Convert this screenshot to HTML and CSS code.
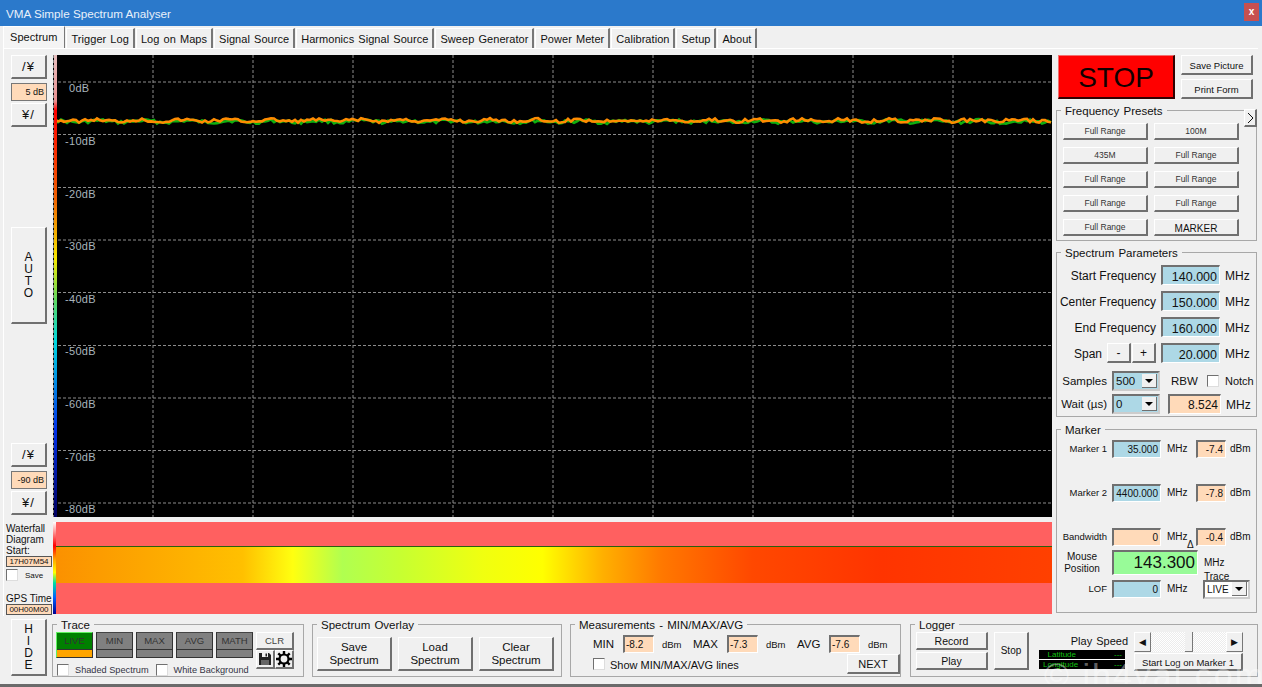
FILE: index.html
```html
<!DOCTYPE html>
<html lang="en">
<head>
    <meta charset="UTF-8">
    <title>VMA Simple Spectrum Analyser</title>
    <link rel="stylesheet" href="styles.css">
</head>
<body>
    <div class="window">
        <div class="titlebar">
            <span>VMA Simple Spectrum Analyser</span>
            <div class="close">x</div>
        </div>

        <div class="tabs">
            <div class="tab active">Spectrum</div>
            <div class="tab">Trigger Log</div>
            <div class="tab">Log on Maps</div>
            <div class="tab">Signal Source</div>
            <div class="tab">Harmonics Signal Source</div>
            <div class="tab">Sweep Generator</div>
            <div class="tab">Power Meter</div>
            <div class="tab">Calibration</div>
            <div class="tab">Setup</div>
            <div class="tab">About</div>
        </div>

        <div class="panel">
            <div class="rail">
                <div class="btn step">/¥</div>
                <div class="field peach rail-field">5 dB</div>
                <div class="btn step">¥/</div>
                <div class="btn auto">A<br>U<br>T<br>O</div>
                <div class="btn step low">/¥</div>
                <div class="field peach rail-field">-90 dB</div>
                <div class="btn step">¥/</div>
            </div>

            <div class="chart">
                <svg id="plot" width="999" height="462" viewBox="0 0 999 462">
                    <rect class="plot-bg" width="999" height="462"/>
                    <defs>
                        <linearGradient id="scale" x1="0" y1="0" x2="0" y2="1">
                            <stop offset="0" stop-color="#e8c0c0"/>
                            <stop offset="0.1" stop-color="#e89090"/>
                            <stop offset="0.12" stop-color="#ff0000"/>
                            <stop offset="0.31" stop-color="#f06000"/>
                            <stop offset="0.44" stop-color="#f8e800"/>
                            <stop offset="0.53" stop-color="#60d860"/>
                            <stop offset="0.62" stop-color="#00d8e0"/>
                            <stop offset="0.81" stop-color="#0030e8"/>
                            <stop offset="1" stop-color="#000060"/>
                        </linearGradient>
                    </defs>
                    <g class="grid">
                        <line x1="100" y1="0" x2="100" y2="462"/>
                        <line x1="200" y1="0" x2="200" y2="462"/>
                        <line x1="300" y1="0" x2="300" y2="462"/>
                        <line x1="400" y1="0" x2="400" y2="462"/>
                        <line x1="500" y1="0" x2="500" y2="462"/>
                        <line x1="600" y1="0" x2="600" y2="462"/>
                        <line x1="700" y1="0" x2="700" y2="462"/>
                        <line x1="800" y1="0" x2="800" y2="462"/>
                        <line x1="900" y1="0" x2="900" y2="462"/>
                        <line x1="0" y1="27" x2="999" y2="27"/>
                        <line x1="0" y1="79.5" x2="999" y2="79.5"/>
                        <line x1="0" y1="132.5" x2="999" y2="132.5"/>
                        <line x1="0" y1="185" x2="999" y2="185"/>
                        <line x1="0" y1="237.5" x2="999" y2="237.5"/>
                        <line x1="0" y1="290.5" x2="999" y2="290.5"/>
                        <line x1="0" y1="343" x2="999" y2="343"/>
                        <line x1="0" y1="395.5" x2="999" y2="395.5"/>
                        <line x1="0" y1="448" x2="999" y2="448"/>
                    </g>
                    <g class="db">
                        <text x="16" y="37">0dB</text>
                        <text x="12" y="90">-10dB</text>
                        <text x="12" y="143">-20dB</text>
                        <text x="12" y="195">-30dB</text>
                        <text x="12" y="248">-40dB</text>
                        <text x="12" y="300">-50dB</text>
                        <text x="12" y="353">-60dB</text>
                        <text x="12" y="406">-70dB</text>
                        <text x="12" y="458">-80dB</text>
                    </g>
                    <polyline id="traceGreen" class="trace-green" points=""/>
                    <polyline id="traceOrange" class="trace-orange" points=""/>
                    <rect class="scale" x="1" width="3" height="462"/>
                    <line class="scale-edge" x1="0.5" y1="0" x2="0.5" y2="462"/>
                </svg>
            </div>

            <div class="side">
                <div class="side-top">
                    <div class="stop">STOP</div>
                    <div class="side-actions">
                        <div class="btn small">Save Picture</div>
                        <div class="btn small">Print Form</div>
                    </div>
                </div>

                <fieldset class="group presets">
                    <legend>Frequency Presets</legend>
                    <div class="btn more">
                        <svg width="7" height="12" viewBox="0 0 7 12">
                            <polyline points="1,1 6,6 1,11" fill="none" stroke="#111" stroke-width="1"/>
                        </svg>
                    </div>
                    <div class="preset-grid">
                        <div class="btn preset">Full Range</div>
                        <div class="btn preset">100M</div>
                        <div class="btn preset">435M</div>
                        <div class="btn preset">Full Range</div>
                        <div class="btn preset">Full Range</div>
                        <div class="btn preset">Full Range</div>
                        <div class="btn preset">Full Range</div>
                        <div class="btn preset">Full Range</div>
                        <div class="btn preset">Full Range</div>
                        <div class="btn preset marker-btn">MARKER</div>
                    </div>
                </fieldset>

                <fieldset class="group params">
                    <legend>Spectrum Parameters</legend>
                    <div class="param-row">
                        <div class="param-label">Start Frequency</div>
                        <div class="field blue param-field">140.000</div>
                        <div class="unit">MHz</div>
                    </div>
                    <div class="param-row">
                        <div class="param-label">Center Frequency</div>
                        <div class="field blue param-field">150.000</div>
                        <div class="unit">MHz</div>
                    </div>
                    <div class="param-row">
                        <div class="param-label">End Frequency</div>
                        <div class="field blue param-field">160.000</div>
                        <div class="unit">MHz</div>
                    </div>
                    <div class="param-row">
                        <div class="param-label span-label">Span</div>
                        <div class="btn span-btn">-</div>
                        <div class="btn span-btn">+</div>
                        <div class="field blue param-field">20.000</div>
                        <div class="unit">MHz</div>
                    </div>
                    <div class="option-row first">
                        <div class="option-label">Samples</div>
                        <div class="combo blue"><span>500</span><div class="combo-arrow"></div></div>
                        <div class="rbw">RBW</div>
                        <input type="checkbox" class="check">
                        <div class="notch">Notch</div>
                    </div>
                    <div class="option-row">
                        <div class="option-label">Wait (µs)</div>
                        <div class="combo blue"><span>0</span><div class="combo-arrow"></div></div>
                        <div class="field peach rbw-field">8.524</div>
                        <div class="unit">MHz</div>
                    </div>
                </fieldset>

                <fieldset class="group marker">
                    <legend>Marker</legend>
                    <div class="marker-row">
                        <div class="marker-label">Marker 1</div>
                        <div class="field blue marker-field">35.000</div>
                        <div class="marker-unit">MHz</div>
                        <div class="field peach dbm-field">-7.4</div>
                        <div class="dbm-unit">dBm</div>
                    </div>
                    <div class="marker-row spaced">
                        <div class="marker-label">Marker 2</div>
                        <div class="field blue marker-field">4400.000</div>
                        <div class="marker-unit">MHz</div>
                        <div class="field peach dbm-field">-7.8</div>
                        <div class="dbm-unit">dBm</div>
                    </div>
                    <div class="marker-row spaced">
                        <div class="marker-label">Bandwidth</div>
                        <div class="field peach marker-field">0</div>
                        <div class="marker-unit">MHz<span class="delta">Δ</span></div>
                        <div class="field peach dbm-field">-0.4</div>
                        <div class="dbm-unit">dBm</div>
                    </div>
                    <div class="mouse-row">
                        <div class="marker-label mouse-label">Mouse<br>Position</div>
                        <div class="field mint mouse-field">143.300</div>
                        <div class="mouse-unit">MHz<br>Trace</div>
                    </div>
                    <div class="marker-row lof-row">
                        <div class="marker-label">LOF</div>
                        <div class="field blue marker-field">0</div>
                        <div class="marker-unit lof-unit">MHz</div>
                        <div class="combo white trace-combo"><span>LIVE</span><div class="combo-arrow"></div></div>
                    </div>
                </fieldset>
            </div>

            <div class="fall-info">
                <div class="fall-title">Waterfall<br>Diagram<br>Start:</div>
                <div class="stamp">17H07M54</div>
                <div class="save-row">
                    <input type="checkbox" class="check">
                    <span>Save</span>
                </div>
                <div class="fall-title gps">GPS Time</div>
                <div class="stamp">00H00M00</div>
            </div>

            <div class="fall">
                <div class="fall-top"></div>
                <div class="fall-line"></div>
                <div class="fall-band"></div>
                <div class="fall-bottom"></div>
                <div class="fall-scale"></div>
            </div>
        </div>

        <div class="strip">
            <div class="btn hide">H<br>I<br>D<br>E</div>

            <fieldset class="group trace">
                <legend>Trace</legend>
                <div class="trace-row">
                    <div class="trace-btn live"><div class="trace-top">LIVE</div><div class="trace-low"></div></div>
                    <div class="trace-btn"><div class="trace-top">MIN</div><div class="trace-low"></div></div>
                    <div class="trace-btn"><div class="trace-top">MAX</div><div class="trace-low"></div></div>
                    <div class="trace-btn"><div class="trace-top">AVG</div><div class="trace-low"></div></div>
                    <div class="trace-btn"><div class="trace-top">MATH</div><div class="trace-low"></div></div>
                    <div class="trace-tools">
                        <div class="btn clr">CLR</div>
                        <div class="tool-row">
                            <div class="btn tool">
                                <svg width="14" height="14" viewBox="0 0 14 14">
                                    <path fill="#222" d="M1 1h10l2 2v10H1z"/>
                                    <rect fill="#f0f0f0" x="4" y="1" width="6" height="4"/>
                                    <rect fill="#222" x="7.5" y="1.5" width="1.5" height="3"/>
                                    <rect fill="#666" x="3" y="8" width="8" height="5"/>
                                </svg>
                            </div>
                            <div class="btn tool">
                                <svg width="16" height="16" viewBox="0 0 16 16">
                                    <circle cx="8" cy="8" r="4.5" fill="none" stroke="#000" stroke-width="2.2"/>
                                    <path stroke="#000" stroke-width="2.4" d="M8 0v3M8 13v3M0 8h3M13 8h3M2.3 2.3l2.2 2.2M11.5 11.5l2.2 2.2M2.3 13.7l2.2-2.2M11.5 4.5l2.2-2.2"/>
                                </svg>
                            </div>
                        </div>
                    </div>
                </div>
                <div class="trace-checks">
                    <input type="checkbox" class="check">
                    <span class="shaded">Shaded Spectrum</span>
                    <input type="checkbox" class="check">
                    <span>White Background</span>
                </div>
            </fieldset>

            <fieldset class="group overlay">
                <legend>Spectrum Overlay</legend>
                <div class="overlay-row">
                    <div class="btn overlay-btn">Save<br>Spectrum</div>
                    <div class="btn overlay-btn">Load<br>Spectrum</div>
                    <div class="btn overlay-btn">Clear<br>Spectrum</div>
                </div>
            </fieldset>

            <fieldset class="group measure">
                <legend>Measurements - MIN/MAX/AVG</legend>
                <div class="measure-row">
                    <span class="measure-name">MIN</span>
                    <div class="field peach measure-field">-8.2</div>
                    <span class="measure-unit">dBm</span>
                    <span class="measure-name name-max">MAX</span>
                    <div class="field peach measure-field">-7.3</div>
                    <span class="measure-unit">dBm</span>
                    <span class="measure-name name-avg">AVG</span>
                    <div class="field peach measure-field">-7.6</div>
                    <span class="measure-unit">dBm</span>
                </div>
                <div class="measure-lines">
                    <input type="checkbox" class="check">
                    <span class="lines-label">Show MIN/MAX/AVG lines</span>
                    <div class="btn next">NEXT</div>
                </div>
            </fieldset>

            <fieldset class="group logger">
                <legend>Logger</legend>
                <div class="logger-row">
                    <div class="log-buttons">
                        <div class="btn log-btn">Record</div>
                        <div class="btn log-btn">Play</div>
                    </div>
                    <div class="btn log-stop">Stop</div>
                    <div class="gps-col">
                        <div class="speed-label">Play Speed</div>
                        <div class="gps-box">
                            <div class="gps-line"><span class="gps-name">Latitude</span><span>---</span></div>
                            <div class="gps-line"><span class="gps-name">Longitude</span><span>---</span></div>
                        </div>
                    </div>
                    <div class="speed-col">
                        <div class="scroll">
                            <div class="scroll-end">◀</div>
                            <div class="scroll-track"><div class="scroll-thumb"></div></div>
                            <div class="scroll-end">▶</div>
                        </div>
                        <div class="btn start-log">Start Log on Marker 1</div>
                    </div>
                </div>
            </fieldset>
        </div>

        <div class="watermark">© jh4vaj.com</div>
    </div>

    <script src="script.js"></script>
</body>
</html>
```

FILE: styles.css
```css
* {
    box-sizing: border-box;
}

body {
    margin: 0;
    width: 1262px;
    height: 687px;
    overflow: hidden;
    font-family: "Liberation Sans", Arial, sans-serif;
    font-size: 12px;
    color: #111;
    background: #f0f0f0;
}

.window {
    position: relative;
    width: 1262px;
    height: 687px;
    background: #f0f0f0;
    border-bottom: 3px solid #6a6a6a;
    overflow: hidden;
}

.titlebar {
    display: flex;
    align-items: center;
    justify-content: space-between;
    height: 26px;
    padding: 0 3px 0 6px;
    background: #2b79cb;
    color: #e8f0fa;
    font-size: 11.7px;
}

.close {
    width: 15px;
    height: 18px;
    margin-top: -2px;
    background: #c75050;
    color: white;
    font-weight: bold;
    font-size: 10px;
    line-height: 18px;
    text-align: center;
}

.tabs {
    display: flex;
    align-items: flex-end;
    height: 22px;
    padding-left: 3px;
}

.tab {
    height: 20px;
    padding: 0 4px;
    margin-right: 1px;
    line-height: 20px;
    font-size: 11px;
    word-spacing: 1px;
    letter-spacing: 0.05px;
    background: #f0f0f0;
    border-top: 1px solid #fff;
    border-left: 1px solid #fff;
    border-right: 2px solid #777;
}

.tab.active {
    height: 22px;
    padding: 0 7px 0 6px;
    background: #f4f4f4;
    border-right: 1px solid #777;
}

.panel {
    display: grid;
    grid-template-columns: 49px 999px 201px;
    grid-template-rows: 462px 92px;
    column-gap: 0;
    row-gap: 5px;
    height: 568px;
    margin: 0 4px 0 3px;
    padding-top: 6px;
    border-top: 1px solid #fff;
    border-left: 1px solid #fff;
}

/* generic 3D button and sunken field */
.btn {
    display: flex;
    align-items: center;
    justify-content: center;
    text-align: center;
    background: #f0f0f0;
    border-style: solid;
    border-width: 1px 2px 2px 1px;
    border-color: #fff #707070 #707070 #fff;
}

.field {
    display: flex;
    align-items: center;
    justify-content: flex-end;
    padding-right: 2px;
    border-style: solid;
    border-width: 2px 1px 1px 2px;
    border-color: #707070 #fff #fff #707070;
}

.blue {
    background: #add8e6;
}

.peach {
    background: #ffdab9;
}

.mint {
    background: #98fb98;
}

.white {
    background: #fff;
}

.check {
    appearance: none;
    flex: none;
    width: 12px;
    height: 12px;
    margin: 0;
    background: #fff;
    border: 1px solid #707070;
    border-right-color: #ddd;
    border-bottom-color: #ddd;
}

.group {
    position: relative;
    margin: 0;
    min-width: 0;
    padding: 0;
    border: 1px solid #a8a8a8;
}

.group legend {
    margin-left: 4px;
    padding: 0 4px;
    height: 14px;
    line-height: 16px;
    font-size: 11.5px;
    word-spacing: 1px;
}

/* left rail */
.rail {
    display: flex;
    flex-direction: column;
    padding-left: 7px;
}

.step {
    width: 36px;
    height: 24px;
    font-size: 13px;
    letter-spacing: 1px;
}

.rail-field {
    width: 36px;
    height: 18px;
    margin: 4px 0 2px;
    font-size: 9px;
    border: 1px solid #777;
}

.auto {
    width: 36px;
    height: 97px;
    margin-top: 100px;
    line-height: 12px;
}

.low {
    margin-top: 119px;
}

/* plot */
.chart {
    height: 462px;
}

#plot {
    display: block;
}

.plot-bg {
    fill: #000;
}

.grid line {
    stroke: #8c8c8c;
    stroke-width: 1;
    stroke-dasharray: 3 2;
}

.db text {
    fill: #a8b4bc;
    font-size: 11px;
    font-family: "Liberation Sans", Arial, sans-serif;
    letter-spacing: 0.3px;
}

.trace-green,
.trace-orange {
    fill: none;
    stroke-width: 2.6;
}

.trace-green {
    stroke: #10b010;
}

.trace-orange {
    stroke: #ff8c00;
}

.scale {
    fill: url(#scale);
}

.scale-edge {
    stroke: #808080;
    stroke-dasharray: 3 2;
}

/* right side */
.side {
    grid-row: 1 / 3;
    grid-column: 3;
    margin-left: 4px;
    width: 201px;
}

.side-top {
    display: flex;
    justify-content: space-between;
    height: 44px;
    padding: 0 4px 0 2px;
}

.stop {
    width: 117px;
    height: 44px;
    background: #ff0000;
    color: #100000;
    font-size: 28px;
    line-height: 44px;
    text-align: center;
    border-style: solid;
    border-width: 1px 2px 2px 1px;
    border-color: #f07070 #300 #300 #f07070;
}

.side-actions {
    display: flex;
    flex-direction: column;
    gap: 4px;
}

.small {
    width: 72px;
    height: 20px;
    padding-top: 1px;
    font-size: 9.5px;
}

.presets {
    height: 138px;
    margin-top: 4px;
    padding-top: 6px;
}

.more {
    position: absolute;
    top: -8px;
    right: -1px;
    width: 13px;
    height: 18px;
}

.preset-grid {
    display: grid;
    grid-template-columns: 85px 85px;
    grid-auto-rows: 17px;
    gap: 7px 6px;
    margin-left: 6px;
}

.preset {
    font-size: 8.5px;
    color: #333;
}

.marker-btn {
    padding-top: 3px;
    font-size: 10px;
    color: #111;
}

.params {
    height: 172px;
    margin-top: 4px;
    padding-top: 6px;
}

.param-row {
    display: flex;
    align-items: center;
    height: 20px;
    margin-bottom: 6px;
    font-size: 12px;
}

.param-label {
    width: 99px;
    padding-top: 2px;
    text-align: right;
    margin-right: 5px;
}

.span-label {
    width: 45px;
}

.span-btn {
    width: 24px;
    height: 20px;
    margin-right: 1px;
}

.span-btn + .param-field {
    margin-left: 4px;
}

.param-field {
    width: 59px;
    height: 20px;
    padding-top: 2px;
    font-size: 12.5px;
}

.unit {
    margin-left: 5px;
    padding-top: 2px;
    font-size: 12px;
}

.option-row {
    display: flex;
    align-items: center;
    height: 20px;
    margin-top: 3px;
    font-size: 11.5px;
}

.option-row.first {
    margin-top: 8px;
}

.option-label {
    width: 50px;
    margin-right: 5px;
    text-align: right;
    white-space: nowrap;
}

.combo {
    display: flex;
    align-items: center;
    justify-content: space-between;
    width: 48px;
    height: 20px;
    padding-left: 2px;
    font-size: 11.5px;
    border-style: solid;
    border-width: 2px;
    border-color: #707070 #ccc #ccc #707070;
}

.combo-arrow {
    position: relative;
    width: 15px;
    height: 14px;
    margin-right: 1px;
    background: #f0f0f0;
    border-right: 1px solid #707070;
    border-bottom: 1px solid #707070;
}

.combo-arrow::after {
    content: "";
    position: absolute;
    left: 3px;
    top: 5px;
    border-left: 4px solid transparent;
    border-right: 4px solid transparent;
    border-top: 4px solid #000;
}

.rbw {
    width: 36px;
    margin-left: 11px;
    font-size: 11.5px;
}

.notch {
    margin-left: 6px;
    font-size: 11px;
}

.rbw-field {
    width: 53px;
    height: 20px;
    margin-left: 8px;
    font-size: 12px;
}

.marker {
    height: 191px;
    margin-top: 5px;
    padding-top: 4px;
}

.marker-row {
    display: flex;
    align-items: center;
    height: 18px;
}

.marker-row.spaced {
    margin-top: 26px;
}

.marker-label {
    width: 50px;
    margin-right: 5px;
    padding-bottom: 2px;
    font-size: 9.5px;
    text-align: right;
    white-space: nowrap;
}

.marker-field {
    width: 49px;
    height: 18px;
    padding-bottom: 1px;
    font-size: 10px;
}

.marker-unit {
    position: relative;
    width: 29px;
    margin-left: 6px;
    padding-bottom: 2px;
    font-size: 10px;
}

.delta {
    position: absolute;
    left: 20px;
    top: 8px;
    font-size: 10px;
}

.dbm-field {
    width: 30px;
    height: 18px;
    padding-bottom: 1px;
    font-size: 10px;
}

.dbm-unit {
    margin-left: 4px;
    padding-bottom: 2px;
    font-size: 10px;
}

.mouse-row {
    display: flex;
    align-items: center;
    height: 25px;
    margin-top: 4px;
}

.mouse-label {
    padding: 0;
    font-size: 10px;
    line-height: 12px;
    text-align: center;
}

.mouse-field {
    width: 86px;
    height: 25px;
    font-size: 17px;
}

.mouse-unit {
    margin: 14px 0 0 6px;
    font-size: 10px;
    line-height: 14px;
}

.lof-row {
    margin-top: 5px;
}

.lof-unit {
    width: 36px;
}

.trace-combo {
    width: 47px;
    height: 19px;
    font-size: 10px;
}

/* waterfall */
.fall-info {
    padding-left: 3px;
    font-size: 10px;
    margin-left: -1px;
    width: 50px;
}

.fall-title {
    padding-top: 1px;
    line-height: 11px;
}

.stamp {
    width: 46px;
    height: 11px;
    background: #ffdab9;
    border: 1px solid #555;
    font-size: 8px;
    line-height: 9px;
    text-align: center;
    white-space: nowrap;
    overflow: hidden;
}

.save-row {
    display: flex;
    align-items: center;
    gap: 7px;
    margin-top: 2px;
    font-size: 8px;
}

.gps {
    margin-top: 11px;
}

.fall {
    position: relative;
    display: flex;
    flex-direction: column;
    height: 92px;
}

.fall-top {
    height: 24px;
    background: #ff6060;
}

.fall-line {
    height: 1px;
    background: #2a6010;
}

.fall-band {
    height: 36px;
    background: linear-gradient(to right, #fb9000 0, #ffc000 19%, #ffff10 24%, #b0ff50 29%, #c8ff30 35%, #f0ff10 43%, #ffff00 49%, #ffb000 55%, #ff7800 61%, #ff4800 70%, #ff3400 83%, #ff4000 100%);
}

.fall-bottom {
    flex: 1;
    background: #ff6060;
}

.fall-scale {
    position: absolute;
    left: 0;
    top: 0;
    width: 3px;
    height: 92px;
    background: linear-gradient(to bottom, #fff 0, #ff0000 26%, #ff0000 26%, #ffa000 40%, #ffff00 55%, #00e0a0 66%, #0060ff 82%, #000090 100%);
}

/* bottom strip */
.strip {
    display: flex;
    align-items: flex-start;
    height: 62px;
    padding: 1px 0 0 11px;
}

.hide {
    width: 36px;
    height: 57px;
    margin-top: 2px;
    line-height: 12px;
}

.trace {
    width: 252px;
    height: 60px;
    margin-left: 5px;
    padding-top: 1px;
}

.trace-row {
    display: flex;
    height: 26px;
    gap: 3px;
    margin-left: 3px;
}

.trace-btn {
    display: flex;
    flex-direction: column;
    width: 37px;
    height: 26px;
    border: 1px solid #333;
    border-top-color: #444;
}

.trace-top {
    flex: 1;
    background: #808080;
    color: #333;
    font-size: 9.5px;
    line-height: 16px;
    text-align: center;
    border-bottom: 1px solid #333;
}

.trace-low {
    height: 8px;
    background: #808080;
}

.live {
    border-top-color: #60f060;
    border-left-color: #60f060;
}

.live .trace-top {
    background: #008000;
}

.live .trace-low {
    background: #ffa500;
}

.trace-tools {
    display: flex;
    flex-direction: column;
    width: 38px;
    height: 37px;
}

.clr {
    height: 18px;
    font-size: 9.5px;
    color: #444;
}

.tool-row {
    display: flex;
    height: 19px;
}

.tool {
    width: 19px;
    height: 19px;
}

.trace-checks {
    display: flex;
    align-items: center;
    height: 13px;
    margin: 5px 0 0 4px;
    font-size: 9.2px;
    color: #334;
}

.trace-checks .check {
    margin-right: 6px;
}

.shaded {
    margin-right: 7px;
}

.overlay {
    width: 250px;
    height: 60px;
    margin-left: 8px;
    padding-top: 6px;
}

.overlay-row {
    display: flex;
    gap: 6px;
    margin-left: 4px;
}

.overlay-btn {
    width: 75px;
    height: 34px;
    padding-top: 1px;
    font-size: 11.5px;
    line-height: 13px;
}

.measure {
    width: 331px;
    height: 60px;
    margin-left: 8px;
    padding-top: 4px;
}

.measure-row {
    display: flex;
    align-items: center;
    height: 18px;
    margin-left: 22px;
}

.measure-name {
    width: 30px;
    font-size: 11.5px;
}

.name-max {
    width: 34px;
}

.name-avg {
    width: 32px;
}

.measure-field {
    justify-content: flex-start;
    width: 31px;
    height: 18px;
    padding: 0 0 0 1px;
    font-size: 10px;
}

.measure-unit {
    width: 39px;
    padding-left: 8px;
    font-size: 9.5px;
}

.measure-lines {
    display: flex;
    align-items: center;
    height: 20px;
    margin: 1px 0 0 22px;
    font-size: 11px;
}

.measure-lines .check {
    margin-right: 5px;
}

.lines-label {
    padding-top: 2px;
}

.next {
    width: 53px;
    height: 20px;
    margin-left: auto;
}

.logger {
    width: 348px;
    height: 60px;
    margin-left: 9px;
    padding-top: 1px;
}

.logger-row {
    display: flex;
    margin-left: 5px;
}

.log-buttons {
    display: flex;
    flex-direction: column;
    gap: 2px;
}

.log-btn {
    width: 72px;
    height: 18px;
    font-size: 10.5px;
}

.log-stop {
    width: 35px;
    height: 38px;
    margin-left: 6px;
    font-size: 10px;
}

.gps-col {
    width: 95px;
    margin-left: 10px;
}

.speed-label {
    height: 18px;
    line-height: 18px;
    text-align: right;
    padding-right: 6px;
    font-size: 11px;
    word-spacing: 1px;
}

.gps-box {
    width: 86px;
    height: 19px;
    background: #000;
    color: #10c010;
    font-size: 8px;
}

.gps-line {
    display: flex;
    justify-content: space-between;
    height: 9px;
    padding: 0 3px 0 4px;
    line-height: 9px;
}

.gps-name {
    width: 33px;
    text-align: right;
    white-space: nowrap;
}

.gps-line + .gps-line {
    height: 10px;
    border-top: 1px solid #fff;
}

.speed-col {
    display: flex;
    flex-direction: column;
    gap: 1px;
    width: 109px;
}

.scroll {
    display: flex;
    height: 20px;
}

.scroll-end {
    width: 17px;
    height: 20px;
    background: #f0f0f0;
    border: 1px solid #fff;
    border-right-color: #777;
    border-bottom-color: #777;
    font-size: 9px;
    line-height: 18px;
    text-align: center;
}

.scroll-track {
    display: flex;
    flex: 1;
    justify-content: center;
    background: repeating-conic-gradient(#fff 0 25%, #ececec 0 50%) 0 0 / 2px 2px;
}

.scroll-thumb {
    width: 8px;
    height: 20px;
    background: #f0f0f0;
    border-right: 1px solid #777;
    border-bottom: 1px solid #777;
}

.start-log {
    width: 109px;
    height: 18px;
    padding-top: 1px;
    font-size: 9.5px;
    white-space: nowrap;
}

.watermark {
    position: absolute;
    right: -3px;
    bottom: -9px;
    font-size: 34px;
    line-height: 36px;
    color: rgba(255, 255, 255, 0.4);
    letter-spacing: 2px;
    white-space: nowrap;
    pointer-events: none;
}
```

FILE: script.js
```js
// Fake noise for the two spectrum traces
function makeTrace(seed, base) {
    const points = [];
    let value = seed;
    for (let x = 2; x < 999; x += 3) {
        value = (value * 9301 + 49297) % 233280;
        const jitter = (value / 233280 - 0.5) * 3.4;
        const wave = Math.sin(x / 7 + seed) * 0.8;
        points.push(x + ',' + (base + jitter + wave).toFixed(1));
    }
    return points.join(' ');
}

document.getElementById('traceGreen').setAttribute('points', makeTrace(17, 66.5));
document.getElementById('traceOrange').setAttribute('points', makeTrace(5, 65.5));
```
